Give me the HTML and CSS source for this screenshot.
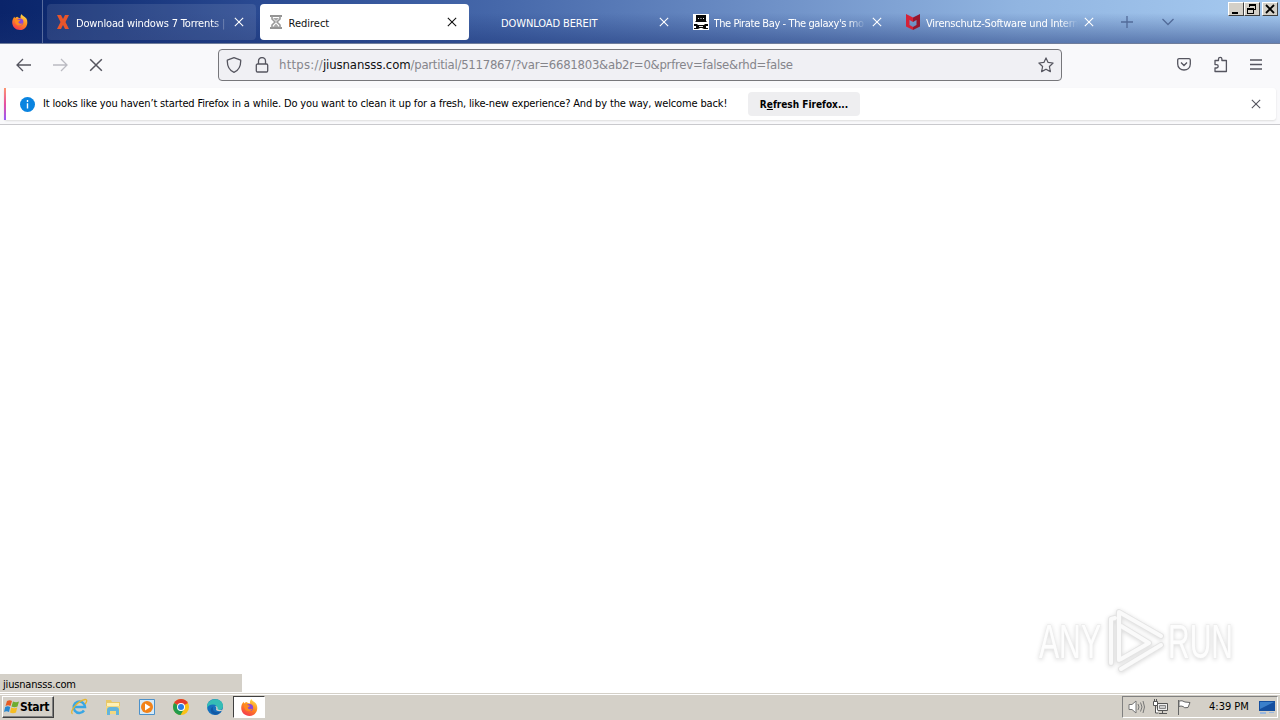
FILE: index.html
```html
<!DOCTYPE html>
<html lang="en">
<head>
<meta charset="utf-8">
<title>Redirect</title>
<link rel="stylesheet" href="styles.css">
</head>
<body>
<svg width="0" height="0" class="defs">
  <defs>
    <linearGradient id="ff" x1="0.8" y1="0" x2="0.3" y2="1"><stop offset="0" stop-color="#ffe34a"/><stop offset=".5" stop-color="#ff8a1e"/><stop offset="1" stop-color="#f5364f"/></linearGradient>
    <symbol id="firefox" viewBox="0 0 16 16">
      <path d="M9.800 0c.2 2 3.200 2.500 4.600 4.600C17 9.500 14 16 8 16 3.500 16 .2 12.800.2 8.300.2 6 1.200 4 2.500 2.700l.5 1.500c.6-.7 1.300-1.300 2.200-1.400C6 3.700 7.300 4 8.600 4.200 8.200 2.500 8.700 1 9.800 0z" fill="url(#ff)"/>
      <circle cx="8" cy="8" r="3.400" fill="#8a48d8"/>
      <path d="M3 5.500c1-.7 2.200-.5 3 .2l2.400.6c-.2 1-1.700 1-2 1.900.6 1.800 3 1.800 4.300.8-.4 2.500-4.500 3.600-6.500 1.200C3 8.900 2.700 7 3 5.500z" fill="#ff8b20"/>
    </symbol>
    <symbol id="x" viewBox="0 0 12 12"><path d="M1 1l10 10M11 1L1 11" fill="none" stroke="currentColor" stroke-width="1.300"/></symbol>
  </defs>
</svg>
<div class="window">
  <header class="tabs">
    <div class="view"><svg width="16" height="16"><use href="#firefox"/></svg></div>
    <div class="tab first">
      <svg class="fav" width="16" height="16" viewBox="0 0 16 16"><path d="M2 1h4l2 4 2-4h4l-3.500 7 3.500 7h-4l-2-4-2 4H2l3.500-7z" fill="#e8552b"/></svg>
      <span class="label t1">Download windows 7 Torrents |</span><svg class="x" width="10" height="10"><use href="#x"/></svg>
    </div>
    <div class="tab active">
      <svg class="fav" width="16" height="16" viewBox="0 0 16 16"><path d="M2 2h12M2 14h12" stroke="#949494" stroke-width="2"/><path d="M4 2v3l3 3-3 3v3M12 2v3L9 8l3 3v3" fill="none" stroke="#999" stroke-width="1.600"/><path d="M5 4h6L8 7zM5 13l3-3.500 3 3.500z" fill="#aaa"/></svg>
      <span class="label">Redirect</span><svg class="x" width="10" height="10"><use href="#x"/></svg>
    </div>
    <div class="tab">
      <span class="fav blank"></span>
      <span class="label t3">DOWNLOAD BEREIT</span><svg class="x" width="10" height="10"><use href="#x"/></svg>
    </div>
    <div class="tab">
      <svg class="fav" width="16" height="16" viewBox="0 0 16 16"><path d="M0 0h16v16H0z" fill="#fff"/><path d="M3 1h10v6l1 1H2l1-1zM1 10h3l1 1h6l1-1h3v2h-2v2h2v1h-4l-2-1H7l-2 1H1v-1h2v-2H1z" fill="#080808"/><path d="M5 4h1v1H5zM7.500 4h1v1h-1zM10 4h1v1h-1zM6 12h4v1H6z" fill="#eee"/></svg>
      <span class="label t4 fade">The Pirate Bay - The galaxy's mo</span><svg class="x" width="10" height="10"><use href="#x"/></svg>
    </div>
    <div class="tab">
      <svg class="fav" width="16" height="16" viewBox="0 0 16 16"><path d="M1 0l7 3.500V8L4.500 6v5L8 13v3l-7-3.500z" fill="#d62238"/><path d="M15 0L8 3.500V8l3.500-2v5L8 13v3l7-3.500z" fill="#97162e"/></svg>
      <span class="label t5 fade">Virenschutz-Software und Intern</span><svg class="x" width="10" height="10"><use href="#x"/></svg>
    </div>
    <svg class="plus" width="12" height="12" viewBox="0 0 12 12"><path d="M0 6h12M6 0v12" stroke="#526b99" stroke-width="1.300"/></svg>
    <svg class="chev" width="12" height="8" viewBox="0 0 12 8"><path d="M.5 1L6 6.500 11.500 1" fill="none" stroke="#526b99" stroke-width="1.300"/></svg>
    <div class="controls">
      <span><svg width="14" height="12"><path d="M3 9h6v2H3z"/></svg></span>
      <span><svg width="14" height="12"><path d="M4 1h7v6H9V6h1V3H5v1H4zM2 5h7v6H2zM3 7v3h5V7z" fill-rule="evenodd"/></svg></span>
      <span class="gap"><svg width="14" height="12"><path d="M3 2l8 8M11 2l-8 8" stroke="#000" stroke-width="1.800"/></svg></span>
    </div>
  </header>
  <nav class="toolbar">
    <svg class="back" width="16" height="14" viewBox="0 0 16 14"><path d="M15 7H1.500M7 1L1 7l6 6" fill="none" stroke="#55555f" stroke-width="1.300"/></svg>
    <svg class="fwd" width="16" height="14" viewBox="0 0 16 14"><path d="M1 7h13.500M9 1l6 6-6 6" fill="none" stroke="#bbbbc2" stroke-width="1.300"/></svg>
    <svg class="stop" width="14" height="14"><use href="#x"/></svg>
    <div class="url">
      <svg width="16" height="16" viewBox="0 0 16 16"><path d="M8 .7l6.700 2.500c.2 6-1.700 10-6.700 12.100C3 13.200 1.100 9.200 1.300 3.200z" fill="none" stroke="#55555f" stroke-width="1.300" stroke-linejoin="round"/></svg>
      <svg class="lock" width="14" height="16" viewBox="0 0 14 16"><path d="M3.500 7V4a3.500 3.500 0 0 1 7 0v3M2.500 7h9a1.200 1.200 0 0 1 1.200 1.200v5.600a1.200 1.200 0 0 1-1.200 1.200h-9a1.200 1.200 0 0 1-1.200-1.200V8.200A1.200 1.200 0 0 1 2.500 7z" fill="none" stroke="#55555f" stroke-width="1.300"/></svg>
      <span class="address"><span class="u1">https://</span><b class="u2">jiusnansss.com</b><span class="u3">/partitial/5117867/?var=6681803&amp;ab2r=0&amp;prfrev=false&amp;rhd=false</span></span>
      <svg class="star" width="16" height="16" viewBox="0 0 16 16"><path d="M8 .9l2.100 4.500 5 .6-3.700 3.500 1 5.100L8 12.200l-4.400 2.400 1-5.100L.9 6l5-.6z" fill="none" stroke="#55555f" stroke-width="1.200" stroke-linejoin="round"/></svg>
    </div>
    <svg class="pocket" width="14" height="13" viewBox="0 0 14 13"><path d="M2 .7h10A1.300 1.300 0 0 1 13.300 2v4c0 8-12.600 8-12.600 0V2A1.300 1.300 0 0 1 2 .7zM4 4.500l3 3 3-3" fill="none" stroke="#55555f" stroke-width="1.300"/></svg>
    <svg class="ext" width="15" height="17" viewBox="0 0 15 17"><path d="M2 4.500h3.500V3a1.700 1.700 0 0 1 3.400 0v1.500h4.500v11H2v-3.500h1.500a1.700 1.700 0 0 0 0-3.400H2z" fill="none" stroke="#55555f" stroke-width="1.300" stroke-linejoin="round"/></svg>
    <svg class="menu" width="12" height="11"><path d="M0 1h12M0 5.500h12M0 10h12" stroke="#55555f" stroke-width="1.300"/></svg>
  </nav>
  <div class="notice-wrap">
    <div class="notice">
      <svg class="info" width="15" height="15" viewBox="0 0 15 15"><circle cx="7.500" cy="7.500" r="7.500" fill="#0a84e0"/><path d="M7.500 3v2M7.500 6.200v5.300" stroke="#fff" stroke-width="1.400"/></svg>
      <span class="message">It looks like you haven’t started Firefox in a while. Do you want to clean it up for a fresh, like-new experience? And by the way, welcome back!</span>
      <button class="refresh">R<u>e</u>fresh Firefox...</button>
      <svg class="dismiss" width="10" height="10"><use href="#x"/></svg>
    </div>
  </div>
  <main class="page">
    <div class="status"><span>jiusnansss.com</span></div>
    <svg class="mark" width="220" height="76" viewBox="0 0 220 76">
      <g class="letters">
        <text x="8" y="54" textLength="62" lengthAdjust="spacingAndGlyphs">ANY</text>
        <text x="137" y="54" textLength="65" lengthAdjust="spacingAndGlyphs">RUN</text>
      </g>
      <g fill="none" stroke-linejoin="round" stroke-linecap="round">
        <path d="M80 59V15l4-1M88 56V8l42 24M90 65l40-24M90 55l28-16-28-17" stroke="#e4e4e4" stroke-width="6"/>
        <path d="M80 59V15l4-1M88 56V8l42 24M90 65l40-24M90 55l28-16-28-17" stroke="#fafafa" stroke-width="4"/>
      </g>
    </svg>
  </main>
</div>
<footer class="taskbar">
  <div class="start"><svg width="16" height="16" viewBox="0 0 16 16"><path d="M3 2q3-1.500 5 0L6.500 7q-2.500-1.500-5 0z" fill="#e65b23"/><path d="M9 2.500q3 1.500 6 0L13.500 7.500q-3 1.500-6 0z" fill="#6eac30"/><path d="M1.200 8q2.500-1.500 5 0L5 13q-2.500-1.500-5 0z" fill="#2787d0"/><path d="M7.200 8.500q3 1.500 6 0L12 13.500q-3 1.500-6 0z" fill="#f6bd22"/></svg><b>Start</b></div>
  <svg class="app" width="18" height="18" viewBox="0 0 18 18"><path d="M14 12.500A5.700 5.700 0 1 1 15 9H5" fill="none" stroke="#38a6e4" stroke-width="2.500"/><path d="M2.500 16C-1 14 7 3 15 1.500c3-.3 1.500 3 0 4.500" fill="none" stroke="#e6b52c" stroke-width="1.300"/></svg>
  <svg class="app" width="18" height="18" viewBox="0 0 18 18"><path d="M2 2h5l1 2h8v12H2z" fill="#e9c867"/><path d="M3 5h12v5H3z" fill="#fff0b4"/><path d="M2 8h14v8H2z" fill="#f2d780"/><path d="M3 17v-5q0-3 3-3h6q3 0 3 3v5h-3v-4H6v4z" fill="#63b4dc"/></svg>
  <svg class="app" width="18" height="18" viewBox="0 0 18 18"><path d="M1.500 1.500h15v15h-15z" fill="#d6eaf8" stroke="#4c91ca"/><circle cx="9" cy="9" r="6" fill="#f28218"/><path d="M7 5.500v7L12.500 9z" fill="#fff"/></svg>
  <svg class="app" width="18" height="18" viewBox="0 0 18 18"><circle cx="9" cy="9" r="8" fill="#fbc116"/><path d="M9 9L2.100 5A8 8 0 0 1 15.900 5z" fill="#e33b2e"/><path d="M9 9L2.100 5A8 8 0 0 0 8.500 17l3.500-6z" fill="#229b4c"/><circle cx="9" cy="9" r="4" fill="#fff"/><circle cx="9" cy="9" r="3" fill="#287de5"/></svg>
  <svg class="app last" width="18" height="18" viewBox="0 0 18 18"><circle cx="9" cy="9" r="8" fill="#1570bd"/><path d="M1 8C2-1 17-1 17 8c0 5-6 4.500-6.500 3.500 1-1 .7-5-3.500-5-3 0-5.500 1.500-6 4z" fill="#35bdb5"/><path d="M7 9c-1 4 3 7 8 4-2 4-7 5-9.500 1.500C4 12 5 9.500 7 9z" fill="#1259a5"/><path d="M8.500 8c2 0 2 3 1.500 3.800.5 1.500 4 2 6.500.7l1.500.5V11c-3 2-7 .5-6.500 0 .7-2-1-3.500-3-3z" fill="#d4d0c8"/></svg>
  <div class="running"><svg width="17" height="17"><use href="#firefox"/></svg></div>
  <div class="tray">
    <svg class="speaker" width="18" height="16" viewBox="0 0 18 16"><path d="M1 5.500h3L8 2v12l-4-3.500H1z" fill="#fff" stroke="#777"/><path d="M10 5q2 3 0 6M12.500 3.500q3 4.500 0 9M15 2q3 6 0 12" fill="none" stroke="#777"/></svg>
    <svg class="net" width="17" height="16" viewBox="0 0 17 16"><path d="M5.500 4.500h10v7h-10zM7 14.500h8M10.500 12v2" fill="#eee" stroke="#555"/><path d="M7.500 6.500h6v3h-6z" fill="#ccc" stroke="#888"/><path d="M1.500 2.500h4v4h-4zM2.500 0v2M4.500 0v2M3.500 7v7h3" fill="#fff" stroke="#555"/></svg>
    <svg class="flag" width="16" height="16" viewBox="0 0 16 16"><path d="M2.500 1v15M3 2q3-1 6 1l5 .5-2 5q-4 1-5-1-2-1-4 0z" fill="#fff" stroke="#666"/></svg>
    <span class="clock">4:39 PM</span>
    <svg width="16" height="14" viewBox="0 0 16 14"><path d="M0 1h16v10H0z" fill="#154f9f"/><path d="M1 2h14L1 9z" fill="#3b7fca"/><path d="M1 12h6v2H1zM10 12h5v1h-5z" fill="#9ab8df"/></svg>
  </div>
</footer>
</body>
</html>
```
FILE: styles.css
```css
* { box-sizing: border-box; }
body { margin: 0; width: 1280px; height: 720px; overflow: hidden; display: flex; flex-direction: column; font: 11px/14px "DejaVu Sans Condensed", "DejaVu Sans", sans-serif; font-stretch: condensed; color: #000; background: #fff; }
svg { display: block; flex: none; }
.defs { position: absolute; }
.window { flex: 1; display: flex; flex-direction: column; }
.tabs { height: 44px; display: flex; align-items: flex-start; padding-top: 4px; position: relative; color: #fff; background: linear-gradient(180deg, transparent 30%, rgba(24,48,115,.48)), linear-gradient(90deg, #0a246a 0, #0c286e 40px, #2a4a92 260px, #4668aa 500px, #7092c8 780px, #91b5e1 1020px, #a6caf0 1280px); border-bottom: 1px solid #6f7d9b; }
.view { width: 43px; height: 43px; margin-top: -4px; margin-right: 4px; padding: 14px 0 0 12px; border-right: 1px solid #586c9d; }
.tab { width: 209px; height: 36px; margin-right: 3.500px; border-radius: 4px; display: flex; align-items: center; padding: 0 12px 0 8px; }
.tab, .view { flex: none; }
.first { background: rgba(255,255,255,.1); }
.active { color: #111; background: #fff; }
.fav { width: 16px; margin-right: 5px; }
.label { flex: 1; min-width: 0; overflow: hidden; white-space: nowrap; padding-top: 3px; }
.t1 { letter-spacing: -.15px; }
.t3 { letter-spacing: -.1px; }
.t4 { letter-spacing: -.4px; }
.t5 { letter-spacing: -.22px; }
.fade { -webkit-mask-image: linear-gradient(90deg, #000 88%, transparent); mask-image: linear-gradient(90deg, #000 88%, transparent); }
.first .label { -webkit-mask-image: linear-gradient(90deg, #000 90%, transparent); mask-image: linear-gradient(90deg, #000 90%, transparent); }
.x { margin-left: 6px; }
.plus { margin: 12px 29px 0 11px; }
.chev { margin-top: 14px; }
.controls { position: absolute; right: 2px; top: 2px; display: flex; }
.controls span { width: 16px; height: 14px; background: #d4d0c8; border: 1px solid; border-color: #fff #404040 #404040 #fff; }
.controls .gap { margin-left: 2px; }
.toolbar { height: 43px; background: #f9f9fb; display: flex; align-items: center; padding: 0 18px 2px 16px; }
.fwd { margin-left: 20px; }
.stop { margin-left: 21px; color: #55555f; }
.url { width: 844px; height: 32px; margin-left: 115px; margin-right: 115px; display: flex; align-items: center; border: 1px solid #77777b; border-radius: 4px; background: #f0f0f4; padding: 0 7px; }
.stop, .url { flex: none; }
.lock { margin-left: 13px; }
.address { flex: 1; margin-left: 10px; white-space: nowrap; font-size: 13px; line-height: 18px; color: #85858b; }
.address b { font-weight: 400; color: #111; }
.u1 { letter-spacing: .25px; }
.u2 { letter-spacing: -.1px; }
.u3 { letter-spacing: -.25px; }
.ext { margin-left: 22px; }
.menu { margin-left: 22px; }
.notice-wrap { height: 38px; padding: 1px 4px 4px; background: #f9f9fb; border-bottom: 1px solid #c9c9cd; }
.notice { height: 32px; display: flex; align-items: center; background: #fff; border-radius: 3px; box-shadow: 0 1px 2px #ddd; padding: 0 15px 0 14px; border-left: 2px solid; border-image: linear-gradient(#ff9a6c, #e64fa0 50%, #9059ff) 1; }
.message { margin-left: 8px; width: 705px; white-space: nowrap; letter-spacing: -.147px; }
.refresh { width: 112px; height: 24px; border: 0; border-radius: 4px; background: #eeeef0; font: bold 10px/14px "DejaVu Sans Condensed", sans-serif; font-stretch: condensed; padding: 1px 0 0; }
.dismiss { margin-left: auto; color: #55555f; }
.page { flex: 1; position: relative; }
.status { position: absolute; left: 0; bottom: 1px; width: 242px; height: 18px; background: #d4d0c8; padding: 4px 3px 0; letter-spacing: -.18px; }
.mark { position: absolute; left: 1031px; top: 479px; font: 48px "Liberation Sans", sans-serif; filter: drop-shadow(0 1px 2px rgba(0,0,0,.15)); }
.letters { fill: #fdfdfd; stroke: #ececec; stroke-width: 1.500px; paint-order: stroke; }
.taskbar { height: 27px; background: #d4d0c8; border-top: 1px solid #d4d0c8; box-shadow: inset 0 1px #fff; display: flex; align-items: center; padding: 0 2px 1px; }
.start { width: 52px; height: 22px; border: 1px solid; border-color: #fff #404040 #404040 #fff; box-shadow: inset -1px -1px #808080; display: flex; align-items: center; padding-left: 1px; margin-right: 16px; font-size: 12px; letter-spacing: -.3px; }
.app { margin-right: 16px; }
.last { margin-right: 9px; }
.running { width: 32px; height: 22px; background: #fff; border: 1px solid; border-color: #404040 #fff #fff #404040; padding: 2px 7px; }
.tray { width: 156px; height: 22px; margin-left: auto; border: 1px solid; border-color: #808080 #fff #fff #808080; display: flex; align-items: center; padding-left: 5px; }
.net { margin-left: 6px; }
.flag { margin-left: 7px; }
.clock { width: 50px; margin-left: 17px; white-space: nowrap; }
```
